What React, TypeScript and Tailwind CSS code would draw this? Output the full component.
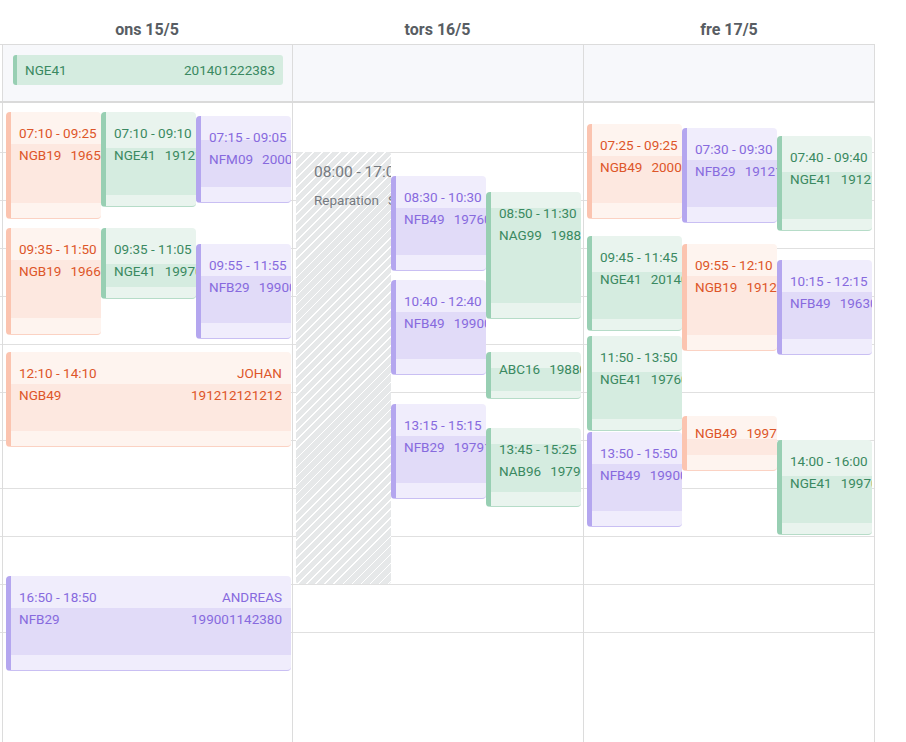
import React from 'react';

type Tone = 'orange' | 'green' | 'purple';

interface CalEvent {
  idx: number;
  span?: boolean;
  start: string;
  end: string;
  tone: Tone;
  code: string;
  num: string;
  name?: string;
  noTime?: boolean;
  bandTop: number;
  bandH: number;
}

const tones: Record<Tone, { bg: string; band: string; edge: string; text: string }> = {
  orange: {
    bg: 'bg-[#fef4ef]',
    band: 'bg-[#fde8e0]',
    edge: 'border-l-[#fbc4b0] border-b-[#fbd2c3]',
    text: 'text-[#dd5629]',
  },
  green: {
    bg: 'bg-[#e9f4ee]',
    band: 'bg-[#d5ece0]',
    edge: 'border-l-[#98cfb3] border-b-[#b6dcc8]',
    text: 'text-[#3a8961]',
  },
  purple: {
    bg: 'bg-[#f0edfc]',
    band: 'bg-[#e1dbf8]',
    edge: 'border-l-[#b4a6ef] border-b-[#c9bff3]',
    text: 'text-[#876ade]',
  },
};

const days: { label: string; events: CalEvent[]; blocked?: boolean }[] = [
  {
    label: 'ons 15/5',
    events: [
      { idx: 0, start: '07:10', end: '09:25', tone: 'orange', code: 'NGB19', num: '196503121234', bandTop: 32, bandH: 59 },
      { idx: 1, start: '07:10', end: '09:10', tone: 'green', code: 'NGE41', num: '191212121212', bandTop: 36, bandH: 47 },
      { idx: 2, start: '07:15', end: '09:05', tone: 'purple', code: 'NFM09', num: '200001012380', bandTop: 24, bandH: 47 },
      { idx: 0, start: '09:35', end: '11:50', tone: 'orange', code: 'NGB19', num: '196601052345', bandTop: 32, bandH: 58 },
      { idx: 1, start: '09:35', end: '11:05', tone: 'green', code: 'NGE41', num: '199703144321', bandTop: 36, bandH: 23 },
      { idx: 2, start: '09:55', end: '11:55', tone: 'purple', code: 'NFB29', num: '199001142380', bandTop: 32, bandH: 47 },
      { idx: 0, span: true, start: '12:10', end: '14:10', tone: 'orange', name: 'JOHAN', code: 'NGB49', num: '191212121212', bandTop: 32, bandH: 47 },
      { idx: 0, span: true, start: '16:50', end: '18:50', tone: 'purple', name: 'ANDREAS', code: 'NFB29', num: '199001142380', bandTop: 32, bandH: 47 },
    ],
  },
  {
    label: 'tors 16/5',
    blocked: true,
    events: [
      { idx: 1, start: '08:30', end: '10:30', tone: 'purple', code: 'NFB49', num: '197601012380', bandTop: 32, bandH: 47 },
      { idx: 2, start: '08:50', end: '11:30', tone: 'green', code: 'NAG99', num: '198803152345', bandTop: 16, bandH: 95 },
      { idx: 1, start: '10:40', end: '12:40', tone: 'purple', code: 'NFB49', num: '199001142380', bandTop: 32, bandH: 47 },
      { idx: 2, start: '12:10', end: '13:10', tone: 'green', code: 'ABC16', num: '198805052345', noTime: true, bandTop: 16, bandH: 23 },
      { idx: 1, start: '13:15', end: '15:15', tone: 'purple', code: 'NFB29', num: '197912122380', bandTop: 32, bandH: 47 },
      { idx: 2, start: '13:45', end: '15:25', tone: 'green', code: 'NAB96', num: '197906062345', bandTop: 16, bandH: 48 },
    ],
  },
  {
    label: 'fre 17/5',
    events: [
      { idx: 0, start: '07:25', end: '09:25', tone: 'orange', code: 'NGB49', num: '200003032380', bandTop: 32, bandH: 47 },
      { idx: 1, start: '07:30', end: '09:30', tone: 'purple', code: 'NFB29', num: '191212121212', bandTop: 32, bandH: 47 },
      { idx: 2, start: '07:40', end: '09:40', tone: 'green', code: 'NGE41', num: '191212121212', bandTop: 36, bandH: 47 },
      { idx: 0, start: '09:45', end: '11:45', tone: 'green', code: 'NGE41', num: '201401222383', bandTop: 36, bandH: 47 },
      { idx: 1, start: '09:55', end: '12:10', tone: 'orange', code: 'NGB19', num: '191212121212', bandTop: 32, bandH: 59 },
      { idx: 2, start: '10:15', end: '12:15', tone: 'purple', code: 'NFB49', num: '196301012380', bandTop: 32, bandH: 47 },
      { idx: 0, start: '11:50', end: '13:50', tone: 'green', code: 'NGE41', num: '197601012345', bandTop: 36, bandH: 47 },
      { idx: 0, start: '13:50', end: '15:50', tone: 'purple', code: 'NFB49', num: '199001142380', bandTop: 32, bandH: 47 },
      { idx: 1, start: '13:30', end: '14:40', tone: 'orange', code: 'NGB49', num: '199701012380', noTime: true, bandTop: 23, bandH: 16 },
      { idx: 2, start: '14:00', end: '16:00', tone: 'green', code: 'NGE41', num: '199701012345', bandTop: 36, bandH: 47 },
    ],
  },
];

const PX_PER_MIN = 0.8;
const DAY_START = 7 * 60;

function toMin(t: string) {
  const [h, m] = t.split(':').map(Number);
  return h * 60 + m;
}

function EventCard({ ev }: { ev: CalEvent }) {
  const t = tones[ev.tone];
  const top = 1 + (toMin(ev.start) - DAY_START) * PX_PER_MIN;
  const height = (toMin(ev.end) - toMin(ev.start)) * PX_PER_MIN - 1;
  const left = 3 + ev.idx * 95;
  const width = ev.span ? 285 : 95;

  return (
    <div
      className={`absolute overflow-hidden rounded-[4px] border-l-[5px] border-b ${t.bg} ${t.edge}`}
      style={{ top, height, left, width }}
    >
      <div className={`absolute inset-x-0 ${t.band}`} style={{ top: ev.bandTop, height: ev.bandH }} />
      <div className={`relative pl-[8px] pr-[9px] text-[13.5px] leading-4 whitespace-nowrap ${t.text} ${ev.noTime ? 'pt-[9px]' : 'pt-[13px]'}`}>
        {!ev.noTime && (
          <div className="flex justify-between gap-[9px]">
            <span>{ev.start} - {ev.end}</span>
            {ev.name && <span>{ev.name}</span>}
          </div>
        )}
        <div className={`flex justify-between gap-[9px] ${ev.noTime ? '' : 'mt-[6px]'}`}>
          <span>{ev.code}</span>
          <span>{ev.num}</span>
        </div>
      </div>
    </div>
  );
}

function GridLines() {
  return (
    <div className="flex flex-col">
      <div className="h-[49px]" />
      {Array.from({ length: 11 }).map((_, i) => (
        <div key={i} className="h-[48px] border-t border-[#e0e0e0]" />
      ))}
      <div className="h-[110px]" />
    </div>
  );
}

export default function App() {
  const colClasses = ['w-[290px]', 'w-[291px]', 'w-[292px] border-r'];

  return (
    <div className="w-[906px] h-[742px] overflow-hidden bg-white font-['Roboto',sans-serif]">
      <div className="w-[875px]">
        {/* day headers */}
        <div className="flex h-[45px] border-b border-[#dcdcdc]">
          <div className="w-[2px]" />
          {days.map((d, i) => (
            <div
              key={d.label}
              className={`${colClasses[i].split(' ')[0]} pt-[20px] text-center text-[16px] leading-[20px] font-bold text-[#585d63]`}
            >
              {d.label}
            </div>
          ))}
        </div>

        {/* all-day row */}
        <div className="flex h-[58px] border-b-2 border-[#dadada]">
          <div className="w-[2px]" />
          {days.map((d, i) => (
            <div key={d.label} className={`${colClasses[i]} border-l border-[#dcdcdc] bg-[#f7f8fb]`}>
              {i === 0 && (
                <div className="mt-[10px] ml-[10px] mr-[9px] flex h-[30px] items-center justify-between rounded-[3px] border-l-[4px] border-[#98cfb3] bg-[#d5ece0] pl-[8px] pr-[8px] text-[13.5px] text-[#3a8961]">
                  <span>NGE41</span>
                  <span>201401222383</span>
                </div>
              )}
            </div>
          ))}
        </div>

        {/* time grid */}
        <div className="flex">
          <div className="w-[2px]">
            <GridLines />
          </div>
          {days.map((d, i) => (
            <div key={d.label} className={`relative ${colClasses[i]} border-l border-[#dcdcdc]`}>
              <GridLines />
              {d.blocked && (
                <div className="absolute left-[3px] top-[49px] h-[432px] w-[95px] overflow-hidden rounded-[3px] bg-[repeating-linear-gradient(135deg,#e6e8e9_0px,#e6e8e9_5.2px,#ffffff_5.2px,#ffffff_6.4px)] pl-[18px] pt-[10px] whitespace-nowrap text-[#757a80]">
                  <div className="text-[15.5px] leading-5">08:00 - 17:00</div>
                  <div className="mt-[10px] flex gap-[9px] text-[13.5px] leading-4">
                    <span>Reparation</span>
                    <span>Service</span>
                  </div>
                </div>
              )}
              {d.events.map((ev, k) => (
                <EventCard key={k} ev={ev} />
              ))}
            </div>
          ))}
        </div>
      </div>
    </div>
  );
}
